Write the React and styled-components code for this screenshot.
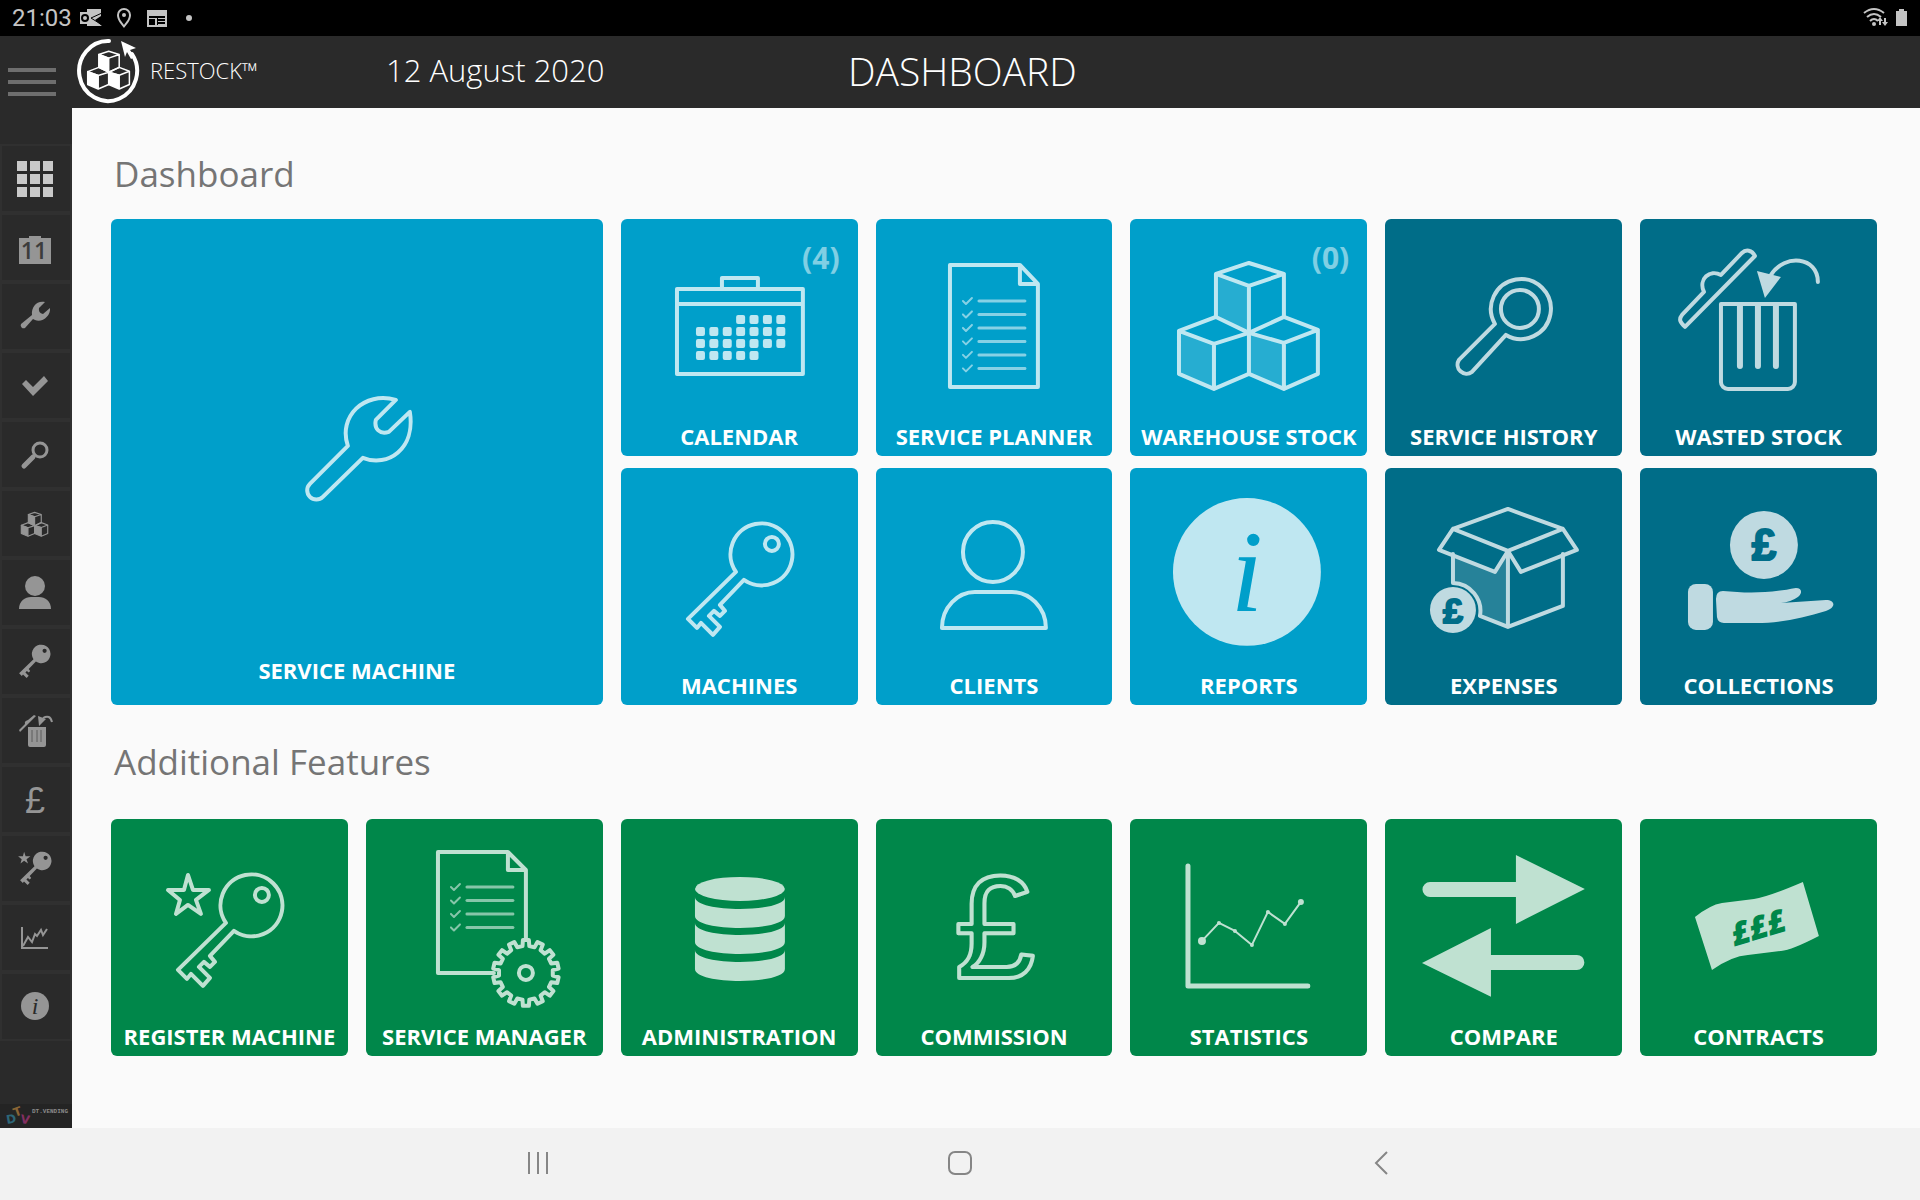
import styled, { createGlobalStyle } from 'styled-components';

const GlobalStyle = createGlobalStyle`
  * {
    box-sizing: border-box;
  }
  body {
    margin: 0;
    background: #fafafa;
    font-family: 'Open Sans', 'Noto Sans', sans-serif;
  }
  button {
    border: 0;
    padding: 0;
    background: none;
    font: inherit;
    color: inherit;
    cursor: pointer;
  }
`;

/* ---------- shared shapes ---------- */

const KEY_PATH =
  'M115 104 L67 151 76 160 80 155 92 167 99 159 88 148 93 143 99 148 104 143 99 137 123 112 A31 31 0 1 0 115 104z';
const STAR = '77,56 82,71 98,71 85,81 90,95 77,86 65,95 69,81 57,71 73,71';
const WRENCH_PATH =
  'M237 227 L199 265 a9 9 0 0 0 13 13 L252 239 C277 249 305 230 299 193 L278 213 C269 216 263 210 265 201 L285 181 C253 172 227 198 237 227z';

const gearPath = (cx, cy, teeth, outer, inner) => {
  const step = (Math.PI * 2) / teeth;
  const points = [];
  for (let i = 0; i < teeth; i++) {
    const a = i * step - Math.PI / 2;
    [
      [a - step * 0.28, inner],
      [a - step * 0.2, outer],
      [a + step * 0.2, outer],
      [a + step * 0.28, inner],
    ].forEach(([angle, r]) => {
      points.push(`${(cx + r * Math.cos(angle)).toFixed(1)} ${(cy + r * Math.sin(angle)).toFixed(1)}`);
    });
  }
  return `M${points.join('L')}z`;
};

const CheckList = ({ x, y, rows }) => (
  <g opacity='0.7'>
    {Array.from({ length: rows }, (_, i) => (
      <g key={i}>
        <path strokeWidth='2' d={`M${x} ${y + i * 13.5} l3 3 6 -6`} />
        <path strokeWidth='3' d={`M${x + 16} ${y + i * 13.5} h46`} />
      </g>
    ))}
  </g>
);

/* ---------- tile icons ---------- */

const Wrench = () => <path d={WRENCH_PATH} />;

const Calendar = () => (
  <>
    <path d='M56 70 H182 V155 H56z M56 85 H182 M101 70 V59 H137 V70' />
    <g fill='currentColor' stroke='none'>
      {[[3, 7], [0, 7], [0, 7], [0, 5]].map(([from, to], row) =>
        Array.from({ length: to - from }, (_, i) => (
          <rect key={`${row}-${i}`} x={75 + (from + i) * 13.4} y={96 + row * 12} width='9' height='9' rx='2' />
        ))
      )}
    </g>
  </>
);

const Planner = () => (
  <>
    <path d='M74 46 H144 L162 65 V168 H74z M144 46 V65 H162' />
    <CheckList x={87} y={82} rows={6} />
  </>
);

const Warehouse = () => (
  <>
    <g fill='currentColor' fillOpacity='0.2' stroke='none'>
      <path d='M86 55 L119 67 V114 L86 98z M49 112 L84 125 V170 L49 155z M119 114 L154 124 V170 L119 155z' />
    </g>
    <path d='M86 98 V55 L119 44 154 55 119 67 86 55 M154 55 V98 M119 67 V155' />
    <path d='M119 114 L86 98 49 112 84 125 119 114 M49 112 V155 L84 170 119 155 M84 125 V170' />
    <path d='M119 114 L154 98 188 111 154 124 119 114 M188 111 V155 L154 170 119 155 M154 124 V170' />
  </>
);

const Magnifier = () => (
  <>
    <circle cx='135' cy='90' r='19' />
    <path d='M110 105 L74 141 a9 9 0 0 0 13 12 L121 116 A30 30 0 1 0 110 105z' />
  </>
);

const Waste = () => (
  <>
    <path d='M81 85 H155 V163 a7 7 0 0 1 -7 7 H88 a7 7 0 0 1 -7 -7z' />
    <path strokeWidth='6' d='M100 87 V147 M118 87 V147 M136 87 V147' />
    <path d='M45 108 L115 37 C112 31 106 30 102 34 L81 56 C70 50 58 60 64 73 L42 96 C38 101 41 104 45 108z' />
    <path d='M178 63 C178 38 145 34 131 56' />
    <path fill='currentColor' stroke='none' d='M117 52 L141 58 125 79z' />
  </>
);

const Machines = () => (
  <>
    <path d={KEY_PATH} />
    <circle cx='151' cy='76' r='7' />
  </>
);

const Clients = () => (
  <>
    <circle cx='117' cy='84' r='30' />
    <path d='M66 160 C66 139 82 124 99 124 H136 C153 124 170 139 170 160z' />
  </>
);

const Reports = () => (
  <>
    <circle cx='117' cy='104' r='74' fill='currentColor' stroke='none' />
    <CutText x='117' y='143' size='116' family="'Liberation Serif', serif" weight='400' italic>
      i
    </CutText>
  </>
);

const Expenses = () => (
  <>
    <path fill='currentColor' fillOpacity='0.2' stroke='none' d='M68 86 L110 104 123 83 V159 L95 148 A28 28 0 0 0 68 115z' />
    <path d='M123 41 L178 61 123 83 68 61z M68 61 L54 82 110 104 123 83 136 104 192 82 178 61' />
    <path d='M68 86 V115 A28 28 0 0 1 95 148 L123 159 178 138 V86 M123 83 V159' />
    <circle cx='68' cy='142' r='23' fill='currentColor' stroke='none' />
    <CutText x='68' y='155' size='36' heavy>£</CutText>
  </>
);

const Collections = () => (
  <>
    <g fill='currentColor' stroke='none'>
      <circle cx='124' cy='77' r='34' />
      <rect x='48' y='116' width='25' height='46' rx='8' />
      <path d='M83 123 C105 125 125 126 156 120 C162 120 163 125 158 129 Q151 134 141 135 L186 132 C196 132 196 140 186 143 C160 151 135 156 110 155 H84 Q78 155 77 149 L76 131 Q76 123 83 123z' />
    </g>
    <CutText x='124' y='92' size='44' heavy>£</CutText>
  </>
);

const RegisterMachine = () => (
  <>
    <Machines />
    <polygon points={STAR} />
  </>
);

const ServiceManager = () => (
  <>
    <path d='M128 154 H72 V33 H142 L160 51 V121 M142 33 V51 H160' />
    <CheckList x={85} y={68} rows={4} />
    <path d={gearPath(160, 154, 14, 33, 27)} />
    <circle cx='160' cy='154' r='7' />
  </>
);

const Administration = () => (
  <g fill='currentColor' stroke='none'>
    <ellipse cx='119' cy='70' rx='45' ry='12' />
    {[0, 26, 53].map((dy) => (
      <path key={dy} d={`M74 ${78 + dy} C74 ${94 + dy} 164 ${94 + dy} 164 ${78 + dy} V${97 + dy} C164 ${113 + dy} 74 ${113 + dy} 74 ${97 + dy}z`} />
    ))}
  </g>
);

const Commission = () => (
  <GlyphText x='119' y='159' $size='146' $family="'Liberation Sans', sans-serif" $weight='400'>
    £
  </GlyphText>
);

const Statistics = () => (
  <>
    <path strokeWidth='5' d='M58 47 V167 H178' />
    <path strokeWidth='2' d='M72 122 L89 104 105 112 122 126 138 93 155 105 171 83' />
    <g fill='currentColor' stroke='none'>
      {[[72, 122, 4], [89, 104, 2], [105, 112, 2], [122, 126, 2], [138, 93, 2], [155, 105, 2], [171, 83, 3]].map(([x, y, r]) => (
        <circle key={x} cx={x} cy={y} r={r} />
      ))}
    </g>
  </>
);

const Compare = () => (
  <path
    fill='currentColor'
    stroke='none'
    d='M45 63 H131 V36 L200 70 131 105 V78 H45 a7 7 0 0 1 0 -15z M192 136 H106 V109 L37 144 106 178 V151 H192 a7 7 0 0 0 0 -15z'
  />
);

const Contracts = () => (
  <>
    <path fill='currentColor' stroke='none' d='M55 98 Q70 86 82 84 L114 80 Q128 78 163 63 L179 117 Q152 131 141 132 L108 136 Q92 137 72 151z' />
    <CutText x='0' y='12' size='32' weight='800' family="'Open Sans', sans-serif" italic transform='translate(118 108) rotate(-17)'>
      £££
    </CutText>
  </>
);

/* ---------- sidebar icons ---------- */

const GridIcon = () =>
  [17, 30, 43].map((y) => [17, 30, 43].map((x) => <rect key={`${x}-${y}`} x={x} y={y} width='10' height='10' fill='#c9c9c9' />));

const CalendarIcon = () => (
  <>
    <path d='M19 25 H29 V23 H41 V25 H51 V51 H19z' />
    <DayText x='34' y='46'>11</DayText>
  </>
);

const WrenchIcon = () => (
  <path d='M33 37 L25 46 a3 3 0 0 1 -4 -4 L32 33 C31 25 37 18 45 20 L39 26 Q38 31 43 32 L50 26 C51 34 42 41 35 38z' />
);

const CheckIcon = () => <path d='M22 33 L26 29 33 36 44 25 48 30 33 45z' />;

const MagnifierIcon = () => (
  <g fill='none' stroke='currentColor' strokeLinecap='round'>
    <circle cx='40' cy='30' r='7' strokeWidth='3' />
    <path d='M33 37 L24 46' strokeWidth='5' />
  </g>
);

const CubeShapes = () => (
  <g stroke='currentColor' strokeLinejoin='round'>
    <path d='M86 55 L119 67 V114 L86 98z M49 112 L84 125 V170 L49 155z M119 114 L154 124 V170 L119 155z' />
    <path fill='none' d='M86 55 L119 44 154 55 119 67z M154 55 V98 L119 114 M49 112 L86 98 119 114 84 125z M119 114 V155 L84 170' />
    <path fill='none' d='M119 114 L154 98 188 111 154 124z M188 111 V155 L154 170' />
  </g>
);

const CubesIcon = () => (
  <g transform='translate(12 15) scale(0.19)' strokeWidth='6'>
    <CubeShapes />
  </g>
);

const PersonIcon = () => (
  <>
    <circle cx='35' cy='28' r='10' />
    <path d='M19 51 C19 43 25 39 31 39 H39 C45 39 51 43 51 51z' />
  </>
);

const KeyIcon = () => (
  <path fillRule='evenodd' transform='translate(-1 1) scale(0.3)' d={`${KEY_PATH} M145 76 a7 7 0 1 0 14 0 a7 7 0 1 0 -14 0z`} />
);

const WasteIcon = () => (
  <>
    <path d='M28 31 H46 V49 Q46 51 44 51 H30 Q28 51 28 49z M19 34 L25 28 Q24 25 28 24 L34 19 36 20 20 36z M38 20 L46 23 39 30z' />
    <path fill='none' stroke='currentColor' strokeWidth='2' d='M43 22 Q50 18 52 26' />
    <path stroke='#5c5c5c' d='M32 34 V46 M37 34 V46 M41 34 V46' />
  </>
);

const PoundIcon = () => <CenteredText x='35' y='48' $size='36' $family="'Liberation Sans', sans-serif">£</CenteredText>;

const RegisterIcon = () => (
  <>
    <polygon transform='translate(1 1) scale(0.3)' points={STAR} />
    <path fillRule='evenodd' transform='translate(0 1) scale(0.3)' d={`${KEY_PATH} M145 76 a7 7 0 1 0 14 0 a7 7 0 1 0 -14 0z`} />
  </>
);

const ChartIcon = () => (
  <g fill='none' stroke='currentColor' strokeWidth='2'>
    <path d='M22 24 V45 H48' />
    <path d='M23 43 L28 34 32 39 35 31 37 33 41 27 43 32 47 26' />
  </g>
);

const InfoIcon = () => (
  <>
    <circle cx='35' cy='34' r='14' />
    <CenteredText x='35' y='42' $size='24' $dark $italic>i</CenteredText>
  </>
);

const sideItems = [
  { label: 'Dashboard', icon: GridIcon },
  { label: 'Calendar', icon: CalendarIcon },
  { label: 'Service machine', icon: WrenchIcon },
  { label: 'Service planner', icon: CheckIcon },
  { label: 'Service history', icon: MagnifierIcon },
  { label: 'Warehouse stock', icon: CubesIcon },
  { label: 'Clients', icon: PersonIcon },
  { label: 'Machines', icon: KeyIcon },
  { label: 'Wasted stock', icon: WasteIcon },
  { label: 'Commission', icon: PoundIcon },
  { label: 'Register machine', icon: RegisterIcon },
  { label: 'Statistics', icon: ChartIcon },
  { label: 'Reports', icon: InfoIcon },
];

const BLUE = '#009fca';
const TEAL = '#006d88';
const GREEN = '#00874a';

const mainTiles = [
  { label: 'CALENDAR', icon: Calendar, color: BLUE, count: '(4)' },
  { label: 'SERVICE PLANNER', icon: Planner, color: BLUE },
  { label: 'WAREHOUSE STOCK', icon: Warehouse, color: BLUE, count: '(0)' },
  { label: 'SERVICE HISTORY', icon: Magnifier, color: TEAL },
  { label: 'WASTED STOCK', icon: Waste, color: TEAL },
  { label: 'MACHINES', icon: Machines, color: BLUE },
  { label: 'CLIENTS', icon: Clients, color: BLUE },
  { label: 'REPORTS', icon: Reports, color: BLUE },
  { label: 'EXPENSES', icon: Expenses, color: TEAL },
  { label: 'COLLECTIONS', icon: Collections, color: TEAL },
];

const featureTiles = [
  { label: 'REGISTER MACHINE', icon: RegisterMachine },
  { label: 'SERVICE MANAGER', icon: ServiceManager },
  { label: 'ADMINISTRATION', icon: Administration },
  { label: 'COMMISSION', icon: Commission },
  { label: 'STATISTICS', icon: Statistics },
  { label: 'COMPARE', icon: Compare },
  { label: 'CONTRACTS', icon: Contracts },
];

const CutText = ({ size, family = "'Liberation Sans', sans-serif", weight = '700', italic, heavy, children, ...rest }) => (
  <KnockoutText $size={size} $family={family} $weight={weight} $italic={italic} $heavy={heavy} {...rest}>
    {children}
  </KnockoutText>
);

const DashTile = ({ label, icon: Icon, color, count }) => (
  <Tile $color={color}>
    <TileArt viewBox='0 0 237 199' aria-hidden='true'>
      <Icon />
    </TileArt>
    {count && <Count>{count}</Count>}
    <TileLabel>{label}</TileLabel>
  </Tile>
);

const App = () => {
  return (
    <Page>
      <GlobalStyle />
      <StatusBar>
        <span>21:03</span>
        <StatusIcons width='110' height='36' viewBox='76 0 110 36' aria-hidden='true'>
          <path d='M87 9 H101 V16 L95 20 102 26 H87z M80 12 H90 V24 H80z' />
          <circle cx='85' cy='18' r='3' fill='none' stroke='#000' strokeWidth='2' />
          <path d='M91 18 L102 25 M91 18 L102 13' stroke='#000' />
          <path fillRule='evenodd' d='M124 8 a7 7 0 0 1 7 7 C131 20 127 24 124 28 C121 24 117 20 117 15 a7 7 0 0 1 7 -7z M124 10 a5 5 0 0 0 -5 5 C119 19 122 22 124 25 C126 22 129 19 129 15 a5 5 0 0 0 -5 -5z' />
          <circle cx='124' cy='15' r='2' />
          <path fillRule='evenodd' d='M147 10 H167 V27 H147z M149 16 V25 H165 V16z' />
          <path d='M149 18 H157 V25 H155 V19 H149z M158 18 H165 V19 H158z M158 21 H165 V22 H158z M158 24 H165 V25 H158z' />
        </StatusIcons>
        <Dot />
        <StatusRight width='48' height='36' viewBox='1860 0 48 36' aria-hidden='true'>
          <g fill='none' stroke='currentColor' strokeWidth='2'>
            <path d='M1864 13 Q1874 5 1884 13 M1867 17 Q1874 11 1881 17 M1870 21 Q1874 17 1878 21' />
          </g>
          <circle cx='1874' cy='24' r='2' />
          <path d='M1880 17 L1883 21 H1881 V25 H1879 V21 H1877z M1885 26 L1882 22 H1884 V18 H1886 V22 H1888z' />
          <path d='M1896 11 H1899 V9 H1904 V11 H1907 V26 H1896z' />
        </StatusRight>
      </StatusBar>

      <Body>
        <Sidebar>
          <MenuButton aria-label='Menu'>
            <i />
            <i />
            <i />
          </MenuButton>
          {sideItems.map(({ label, icon: Icon }) => (
            <SideButton key={label} aria-label={label}>
              <svg width='72' height='69' viewBox='0 0 72 69' fill='currentColor' aria-hidden='true'>
                <Icon />
              </svg>
            </SideButton>
          ))}
          <Vendor>
            <svg width='32' height='24' viewBox='0 0 32 24' aria-hidden='true'>
              <text fill='#8a6534' transform='translate(15 13) rotate(-20)'>T</text>
              <text fill='#2d6678' transform='translate(7 20) rotate(-10)'>D</text>
              <text fill='#832f62' transform='translate(20 19) rotate(8)'>V</text>
            </svg>
            <span>DT.VENDING</span>
          </Vendor>
        </Sidebar>

        <Content>
          <Header>
            <Brand>
              <svg width='64' height='72' viewBox='76 36 64 72' aria-hidden='true'>
                <path d='M109 41 A29 30 0 1 0 132 54' fill='none' stroke='#fff' strokeWidth='4' strokeLinecap='round' />
                <path d='M121 41 L136 48 130 50 135 57 131 59 127 52 125 57z' fill='#fff' />
                <g transform='translate(73 38) scale(0.3)' fill='#fff' color='#fff' strokeWidth='5'>
                  <CubeShapes />
                </g>
              </svg>
              RESTOCK™
            </Brand>
            <Today>12 August 2020</Today>
            <Title>DASHBOARD</Title>
          </Header>

          <Main>
            <SectionTitle>Dashboard</SectionTitle>
            <TileGrid>
              <Tile $color={BLUE} $big>
                <TileArt viewBox='0 0 492 433' aria-hidden='true'>
                  <Wrench />
                </TileArt>
                <TileLabel $big>SERVICE MACHINE</TileLabel>
              </Tile>
              {mainTiles.map((tile) => (
                <DashTile key={tile.label} {...tile} />
              ))}
            </TileGrid>
            <SectionTitle>Additional Features</SectionTitle>
            <TileGrid>
              {featureTiles.map((tile) => (
                <DashTile key={tile.label} color={GREEN} {...tile} />
              ))}
            </TileGrid>
          </Main>
        </Content>
      </Body>

      <NavBar>
        <button aria-label='Recent apps'>
          <svg width='24' height='24' viewBox='0 0 24 24'>
            <path d='M3 1 V23 M12 1 V23 M21 1 V23' />
          </svg>
        </button>
        <button aria-label='Home'>
          <svg width='24' height='24' viewBox='0 0 24 24'>
            <rect x='1' y='1' width='22' height='22' rx='6' />
          </svg>
        </button>
        <button aria-label='Back'>
          <svg width='24' height='24' viewBox='0 0 24 24'>
            <path d='M17 1 L6 12 17 23' />
          </svg>
        </button>
      </NavBar>
    </Page>
  );
};

const Page = styled.div`
  min-height: 100vh;
  display: flex;
  flex-direction: column;
`;

const StatusBar = styled.div`
  height: 36px;
  padding: 0 12px;
  display: flex;
  align-items: center;
  background: #000;
  color: #c4c4c4;
  font-family: Roboto, sans-serif;
  font-size: 24px;
`;

const StatusIcons = styled.svg`
  margin-left: 4px;
  fill: currentColor;
`;

const StatusRight = styled.svg`
  margin-left: auto;
  fill: currentColor;
`;

const Dot = styled.i`
  width: 6px;
  height: 6px;
  border-radius: 50%;
  background: currentColor;
`;

const Body = styled.div`
  flex: 1;
  display: flex;
`;

const Sidebar = styled.nav`
  width: 72px;
  flex: none;
  display: flex;
  flex-direction: column;
  background: #2a2a2a;
  color: #959595;
`;

const MenuButton = styled.button`
  height: 108px;
  padding: 32px 16px 48px 8px;
  display: flex;
  flex-direction: column;
  justify-content: space-between;

  i {
    width: 48px;
    height: 4px;
    background: #6e6e6e;
  }
`;

const SideButton = styled.button`
  height: 69px;
  border: 2px solid #303030;
  overflow: hidden;

  svg {
    display: block;
    margin: -2px;
  }
`;

const Vendor = styled.div`
  margin-top: auto;
  height: 24px;
  display: flex;
  background: #242424;
  color: #8a8a8a;
  font-family: 'Liberation Mono', monospace;
  font-size: 6px;
  line-height: 16px;
  font-weight: 700;

  svg {
    flex: none;
    overflow: visible;
    font-size: 12px;
  }
  text {
    font-family: 'DejaVu Sans', sans-serif;
  }
`;

const Content = styled.div`
  flex: 1;
  min-width: 0;
  display: flex;
  flex-direction: column;
`;

const Header = styled.header`
  height: 72px;
  display: flex;
  align-items: flex-start;
  background: #2a2a2a;
  color: #fff;
  font-weight: 300;
  line-height: 68px;
`;

const Brand = styled.div`
  width: 314px;
  padding-left: 4px;
  display: flex;
  align-items: flex-start;
  gap: 10px;
  font-size: 22px;
`;

const Today = styled.div`
  width: 462px;
  font-size: 31px;
`;

const Title = styled.h1`
  margin: 0;
  font-size: 39px;
  line-height: 70px;
  font-weight: 300;
`;

const Main = styled.main`
  flex: 1;
  padding: 42px 43px 42px 39px;
  background: #fafafa;
`;

const SectionTitle = styled.h2`
  margin: 0 0 21px 3px;
  font-size: 35px;
  line-height: 48px;
  font-weight: 400;
  color: #757575;
`;

const TileGrid = styled.div`
  display: grid;
  grid-template-columns: repeat(7, minmax(0, 1fr));
  gap: 12px 18px;

  & + ${SectionTitle} {
    margin: 33px 0 33px 3px;
  }
`;

const Tile = styled.button`
  position: relative;
  min-width: 0;
  display: flex;
  flex-direction: column;
  border-radius: 6px;
  background: ${({ $color }) => $color};
  color: #fff;
  --tile: ${({ $color }) => $color};
  ${({ $big }) => ($big ? 'grid-area: span 2 / span 2;' : 'aspect-ratio: 1;')}
`;

const TileArt = styled.svg`
  width: 100%;
  height: 0;
  flex: 1 1 0;
  min-height: 0;
  opacity: 0.75;
  fill: none;
  stroke: currentColor;
  stroke-width: 4px;
  stroke-linejoin: round;
  stroke-linecap: round;
`;

const TileLabel = styled.span`
  width: 100%;
  padding-bottom: ${({ $big }) => ($big ? '17px' : '2px')};
  text-align: center;
  white-space: nowrap;
  font-size: 22px;
  line-height: 36px;
  font-weight: 700;
`;

const Count = styled.span`
  position: absolute;
  top: 18px;
  right: 18px;
  opacity: 0.5;
  font-size: 30px;
  line-height: 41px;
  font-weight: 700;
`;

const GlyphText = styled.text`
  text-anchor: middle;
  font-family: ${({ $family }) => $family};
  font-size: ${({ $size }) => $size}px;
  font-weight: ${({ $weight }) => $weight};
  font-style: ${({ $italic }) => ($italic ? 'italic' : 'normal')};
`;

const KnockoutText = styled(GlyphText)`
  fill: var(--tile);
  stroke: ${({ $heavy }) => ($heavy ? 'var(--tile)' : 'none')};
  stroke-width: 2px;
`;

const CenteredText = styled.text`
  text-anchor: middle;
  font-family: ${({ $family }) => $family || "'Liberation Serif', serif"};
  font-size: ${({ $size }) => $size}px;
  font-style: ${({ $italic }) => ($italic ? 'italic' : 'normal')};
  fill: ${({ $dark }) => ($dark ? '#2a2a2a' : 'currentColor')};
`;

const DayText = styled.text`
  text-anchor: middle;
  font-family: 'Open Sans', sans-serif;
  font-size: 23px;
  font-weight: 600;
  fill: #3c3c3c;
`;

const NavBar = styled.nav`
  height: 72px;
  padding: 0 17% 2px;
  display: grid;
  grid-template-columns: repeat(3, 1fr);
  background: #f2f2f2;

  svg {
    display: block;
    margin: 0 auto;
    fill: none;
    stroke: #868686;
    stroke-width: 2px;
  }
`;

export default App;
